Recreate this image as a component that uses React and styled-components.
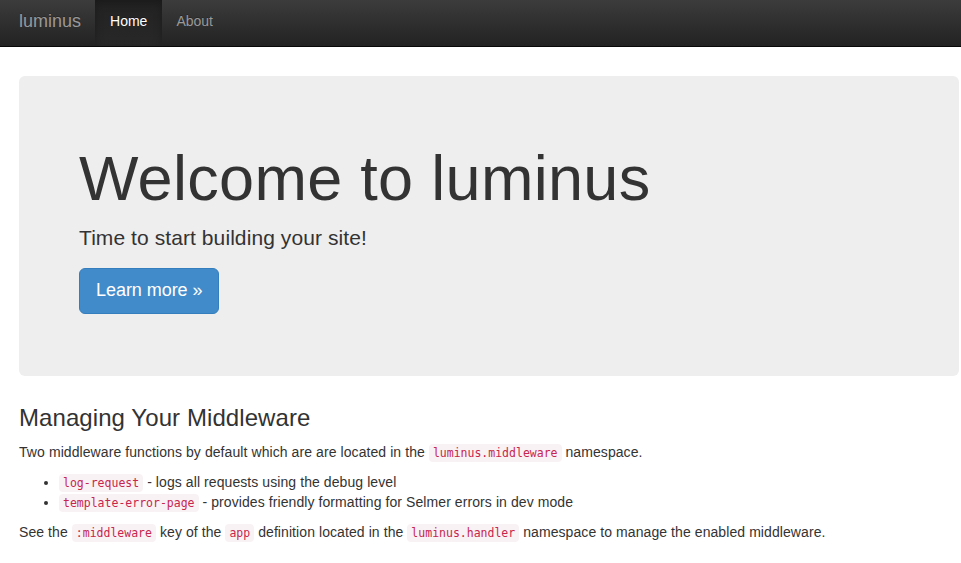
import styled, { createGlobalStyle } from 'styled-components';

const GlobalStyle = createGlobalStyle`
    html, body {
        margin: 0;
        padding: 0;
        background: #fff;
    }
    body {
        font-family: "Liberation Sans", Arial, Helvetica, sans-serif;
        font-size: 14px;
        line-height: 1.428571429;
        letter-spacing: 0.08px;
        color: #333;
    }
    * {
        box-sizing: border-box;
    }
`;

export default function App() {
    return (
        <>
            <GlobalStyle />
            <Navbar>
                <Brand href="#">luminus</Brand>
                <NavList>
                    <li><NavLink href="#" active>Home</NavLink></li>
                    <li><NavLink href="#">About</NavLink></li>
                </NavList>
            </Navbar>
            <Container>
                <Jumbotron>
                    <h1>Welcome to luminus</h1>
                    <p>Time to start building your site!</p>
                    <p><Button href="#">Learn more »</Button></p>
                </Jumbotron>
                <Section>
                    <h3>Managing Your Middleware</h3>
                    <p>
                        Two middleware functions by default which are are located in the <Code>luminus.middleware</Code> namespace.
                    </p>
                    <ul>
                        <li><Code>log-request</Code> - logs all requests using the debug level</li>
                        <li><Code>template-error-page</Code> - provides friendly formatting for Selmer errors in dev mode</li>
                    </ul>
                    <p>
                        See the <Code>:middleware</Code> key of the <Code>app</Code> definition located in the <Code>luminus.handler</Code> namespace to manage the enabled middleware.
                    </p>
                </Section>
            </Container>
        </>
    );
}

const Navbar = styled.nav`
    display: flex;
    align-items: stretch;
    height: 47px;
    padding: 0 4px;
    background-image: linear-gradient(to bottom, #3c3c3c 0%, #222 100%);
    border-bottom: 1px solid #080808;
`;

const Brand = styled.a`
    display: flex;
    align-items: center;
    padding: 0 14px 3px 15px;
    font-size: 18px;
    letter-spacing: 0;
    color: #999;
    text-decoration: none;
    text-shadow: 0 -1px 0 rgba(0,0,0,0.25);
`;

const NavList = styled.ul`
    display: flex;
    margin: 0;
    padding: 0;
    list-style: none;
    li {
        display: flex;
    }
`;

const NavLink = styled.a`
    display: flex;
    align-items: center;
    padding: 0 ${props => props.active ? '15px' : '14px'} 4px;
    font-size: 14px;
    letter-spacing: 0;
    text-decoration: none;
    color: ${props => props.active ? '#fff' : '#999'};
    background-image: ${props => props.active ? 'linear-gradient(to bottom, #222 0%, #282828 100%)' : 'none'};
    box-shadow: ${props => props.active ? 'inset 0 3px 9px rgba(0,0,0,0.25)' : 'none'};
    text-shadow: 0 -1px 0 rgba(0,0,0,0.25);
`;

const Container = styled.div`
    width: 940px;
    margin: 29px 0 0 19px;
`;

const Jumbotron = styled.div`
    padding: 48px 60px 47px;
    margin-bottom: 29px;
    background: #eee;
    border-radius: 6px;

    h1 {
        margin: 20px 0 10px;
        font-size: 63px;
        font-weight: 500;
        line-height: 1.1;
        letter-spacing: 0.3px;
        color: inherit;
    }
    p {
        margin: 0 0 15px;
        font-size: 21px;
        font-weight: 200;
        line-height: 1.428571429;
    }
`;

const Button = styled.a`
    display: inline-block;
    padding: 10px 16px;
    font-size: 18px;
    line-height: 1.33;
    letter-spacing: -0.05px;
    color: #fff;
    text-decoration: none;
    background: #428bca;
    border: 1px solid #357ebd;
    border-radius: 6px;
    vertical-align: middle;
`;

const Section = styled.div`
    h3 {
        margin: 0 0 10px;
        font-size: 24px;
        font-weight: 500;
        line-height: 1.1;
    }
    p {
        margin: 0 0 10px;
    }
    ul {
        margin: 0 0 10px;
        padding-left: 40px;
    }
`;

const Code = styled.code`
    padding: 2px 4px;
    font-family: "DejaVu Sans Mono", "Liberation Mono", monospace;
    font-size: 11.5px;
    letter-spacing: 0;
    color: #c7254e;
    background-color: #f9f2f4;
    border-radius: 4px;
    white-space: nowrap;
`;
